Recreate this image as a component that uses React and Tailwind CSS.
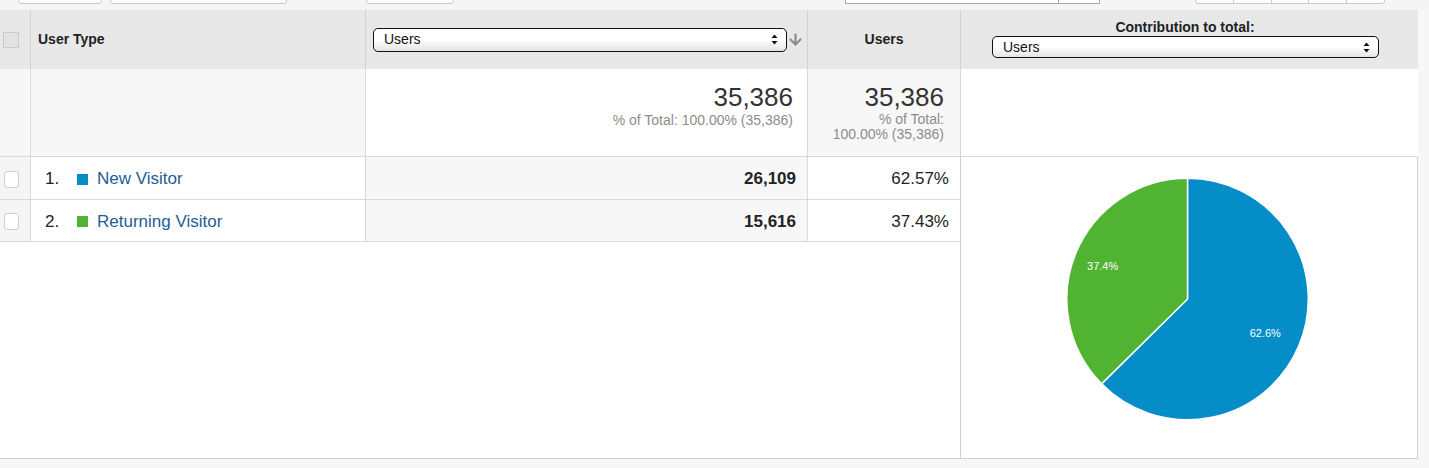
import React from "react";
import { ArrowDown } from "lucide-react";

const rows = [
  { n: "1.", name: "New Visitor", color: "bg-[#058dc7]", users: "26,109", pct: "62.57%" },
  { n: "2.", name: "Returning Visitor", color: "bg-[#50b432]", users: "15,616", pct: "37.43%" },
];

function UpDown() {
  return (
    <svg width="7" height="11" viewBox="0 0 7 11" className="shrink-0">
      <path d="M3.5 0.5 L6.5 4 L0.5 4 Z" fill="#111" />
      <path d="M3.5 10.5 L6.5 7 L0.5 7 Z" fill="#111" />
    </svg>
  );
}

function Select({ className }) {
  return (
    <div
      className={`flex items-center justify-between rounded-[5px] border-[1.5px] border-[#111] bg-gradient-to-b from-white via-white to-[#e4e4e4] pl-[10px] pr-[8px] text-[14px] text-[#111] ${className}`}
    >
      <span>Users</span>
      <UpDown />
    </div>
  );
}

function Pie() {
  return (
    <svg viewBox="0 0 457 301" className="h-full w-full">
      <path d="M227 142 L227 21 A121 121 0 1 1 140.9 227 Z" fill="#058dc7" stroke="#fff" strokeWidth="1.5" />
      <path d="M227 142 L227 21 A121 121 0 0 0 140.9 227 Z" fill="#50b432" stroke="#fff" strokeWidth="1.5" />
      <text x="142" y="113" fill="#fff" fontSize="11" textAnchor="middle" fontFamily="Liberation Sans, Arial, sans-serif">
        37.4%
      </text>
      <text x="305" y="180" fill="#fff" fontSize="11" textAnchor="middle" fontFamily="Liberation Sans, Arial, sans-serif">
        62.6%
      </text>
    </svg>
  );
}

export default function App() {
  return (
    <div className="h-[468px] w-[1429px] overflow-hidden bg-[#f7f7f7] font-['Liberation_Sans',Arial,sans-serif] text-[#222]">
      {/* toolbar edge, mostly scrolled off */}
      <div className="flex h-[10px] items-end overflow-hidden bg-[#f5f5f5]">
        <div className="mb-[6px] ml-[18px] h-[30px] w-[84px] shrink-0 rounded-b-[3px] border border-[#c8c8c8] bg-white" />
        <div className="mb-[6px] ml-[8px] h-[30px] w-[177px] shrink-0 rounded-b-[3px] border border-[#c8c8c8] bg-white" />
        <div className="mb-[6px] ml-[79px] h-[30px] w-[88px] shrink-0 rounded-b-[3px] border border-[#c8c8c8] bg-white" />
        <div className="mb-[6px] ml-[391px] flex h-[30px] w-[255px] shrink-0 border border-[#aaa] bg-white">
          <div className="flex-1 border-r border-[#aaa]" />
          <div className="w-[40px]" />
        </div>
        <div className="mb-[6px] ml-[95px] flex h-[30px] w-[190px] shrink-0 rounded-b-[3px] border border-[#c8c8c8] bg-white">
          <div className="flex-1 border-r border-[#c8c8c8]" />
          <div className="flex-1 border-r border-[#c8c8c8]" />
          <div className="flex-1 border-r border-[#c8c8c8]" />
          <div className="flex-1 border-r border-[#c8c8c8]" />
          <div className="flex-1" />
        </div>
      </div>

      <div className="grid w-[1418px] grid-cols-[31px_335px_442px_152px_458px] grid-rows-[59px_88px_43px_42px_217px]">
        {/* header */}
        <div className="flex items-center border-r border-[#d2d2d2] bg-[#e8e8e8] pl-[3px]">
          <div className="h-[16px] w-[16px] border border-[#c9c9c9] bg-[#e2e2e2]" />
        </div>
        <div className="flex items-center border-r border-[#d2d2d2] bg-[#e8e8e8] pl-[7px] text-[14px] font-bold">
          User Type
        </div>
        <div className="flex items-center border-r border-[#d2d2d2] bg-[#e8e8e8] pl-[7px]">
          <Select className="h-[24px] w-[414px]" />
          <ArrowDown className="h-[17px] w-[17px] text-[#8a8a8a]" strokeWidth={3} />
        </div>
        <div className="flex items-center justify-center bg-[#e8e8e8] text-[14px] font-bold">Users</div>
        <div className="flex flex-col border-l border-[#d2d2d2] bg-[#e8e8e8] pl-[31px] pt-[10px]">
          <div className="w-[386px] text-center text-[14px] leading-[15px] font-bold">Contribution to total:</div>
          <Select className="mt-[1px] h-[22px] w-[387px]" />
        </div>

        {/* totals */}
        <div className="border-r border-b border-[#d9d9d9] bg-[#f7f7f7]" />
        <div className="border-r border-b border-[#d9d9d9] bg-[#f7f7f7]" />
        <div className="border-r border-b border-[#d9d9d9] bg-white pr-[14px] pt-[13px] text-right">
          <div className="text-[26px] leading-[30px] text-[#333]">35,386</div>
          <div className="text-[14px] leading-[16px] text-[#8c8c8c]">% of Total: 100.00% (35,386)</div>
        </div>
        <div className="border-b border-[#d9d9d9] bg-[#f7f7f7] pr-[16px] pt-[13px] text-right">
          <div className="text-[26px] leading-[30px] text-[#333]">35,386</div>
          <div className="text-[14px] leading-[15px] text-[#8c8c8c]">
            % of Total:
            <br />
            100.00% (35,386)
          </div>
        </div>
        <div className="border-l border-b border-[#d9d9d9] bg-white" />

        {/* data rows + chart */}
        {rows.map((r, i) => (
          <React.Fragment key={r.name}>
            <div className="flex items-center border-r border-b border-[#d9d9d9] bg-[#f5f5f5] pl-[4px] pt-[2px]">
              <div className="h-[17px] w-[15px] rounded-[3px] border border-[#cfcfcf] bg-white" />
            </div>
            <div className="flex items-center border-r border-b border-[#d9d9d9] bg-white pl-[14px] pt-[2px] text-[17px]">
              <span className="w-[32px]">{r.n}</span>
              <span className={`h-[11px] w-[11px] ${r.color}`} />
              <span className="ml-[9px] text-[#245d9a]">{r.name}</span>
            </div>
            <div className="flex items-center justify-end border-r border-b border-[#d9d9d9] bg-[#f7f7f7] pr-[11px] pt-[2px] text-[17px] font-bold">
              {r.users}
            </div>
            <div className="flex items-center justify-end border-b border-[#d9d9d9] bg-white pr-[11px] pt-[2px] text-[17px]">
              {r.pct}
            </div>
            {i === 0 && (
              <div className="row-span-3 border-x border-b border-[#d0d0d0] bg-white">
                <Pie />
              </div>
            )}
          </React.Fragment>
        ))}

        <div className="col-span-4 border-b border-[#d0d0d0] bg-white" />
      </div>
    </div>
  );
}
